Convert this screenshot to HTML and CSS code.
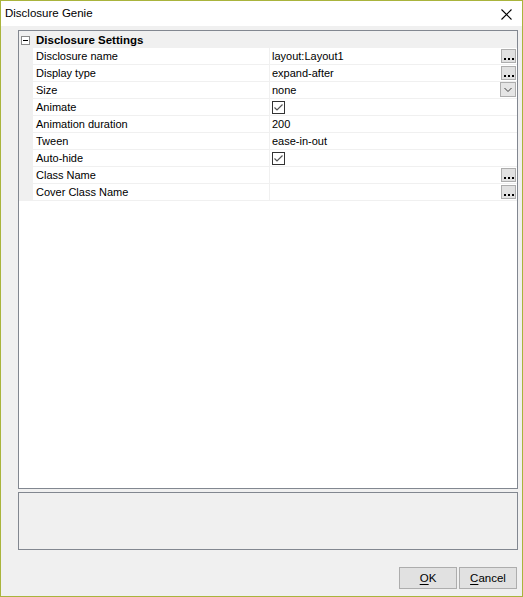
FILE: index.html
```html
<!DOCTYPE html>
<html>
<head>
<meta charset="utf-8">
<link rel="stylesheet" href="styles.css">
</head>
<body>
<div class="window">
  <div class="titlebar">
    <span class="title">Disclosure Genie</span>
    <svg class="close" width="11" height="11" viewBox="0 0 11 11"><path d="M0.5 0.5 L10.5 10.5 M10.5 0.5 L0.5 10.5" stroke="#000" stroke-width="1.1" fill="none"/></svg>
  </div>
  <div class="client">
    <div class="grid">
      <div class="cat">
        <span class="exp"><span class="minus"></span></span>
        <span class="cat-label">Disclosure Settings</span>
      </div>
      <div class="row"><div class="margin"></div><div class="name">Disclosure name</div><div class="value"><span>layout:Layout1</span><span class="ell"><svg width="13" height="12" viewBox="0 0 13 12"><rect x="2" y="8" width="2" height="2" fill="#000"/><rect x="6" y="8" width="2" height="2" fill="#000"/><rect x="10" y="8" width="2" height="2" fill="#000"/></svg></span></div></div>
      <div class="row"><div class="margin"></div><div class="name">Display type</div><div class="value"><span>expand-after</span><span class="ell"><svg width="13" height="12" viewBox="0 0 13 12"><rect x="2" y="8" width="2" height="2" fill="#000"/><rect x="6" y="8" width="2" height="2" fill="#000"/><rect x="10" y="8" width="2" height="2" fill="#000"/></svg></span></div></div>
      <div class="row"><div class="margin"></div><div class="name">Size</div><div class="value"><span>none</span><span class="drop"><svg width="14" height="13" viewBox="0 0 14 13"><path d="M3.5 5 L7 8.5 L10.5 5" stroke="#3c3c3c" stroke-width="1" fill="none"/></svg></span></div></div>
      <div class="row"><div class="margin"></div><div class="name">Animate</div><div class="value"><span class="check"><svg width="11" height="11" viewBox="0 0 11 11"><path d="M1.5 5.5 L4 8 L9.5 2.5" stroke="#555" stroke-width="1.2" fill="none"/></svg></span></div></div>
      <div class="row"><div class="margin"></div><div class="name">Animation duration</div><div class="value"><span class="num">200</span></div></div>
      <div class="row"><div class="margin"></div><div class="name">Tween</div><div class="value"><span>ease-in-out</span></div></div>
      <div class="row"><div class="margin"></div><div class="name">Auto-hide</div><div class="value"><span class="check"><svg width="11" height="11" viewBox="0 0 11 11"><path d="M1.5 5.5 L4 8 L9.5 2.5" stroke="#555" stroke-width="1.2" fill="none"/></svg></span></div></div>
      <div class="row"><div class="margin"></div><div class="name">Class Name</div><div class="value"><span></span><span class="ell"><svg width="13" height="12" viewBox="0 0 13 12"><rect x="2" y="8" width="2" height="2" fill="#000"/><rect x="6" y="8" width="2" height="2" fill="#000"/><rect x="10" y="8" width="2" height="2" fill="#000"/></svg></span></div></div>
      <div class="row"><div class="margin"></div><div class="name">Cover Class Name</div><div class="value"><span></span><span class="ell"><svg width="13" height="12" viewBox="0 0 13 12"><rect x="2" y="8" width="2" height="2" fill="#000"/><rect x="6" y="8" width="2" height="2" fill="#000"/><rect x="10" y="8" width="2" height="2" fill="#000"/></svg></span></div></div>
    </div>
    <div class="desc"></div>
    <div class="buttons">
      <button class="btn"><u>O</u>K</button>
      <button class="btn"><u>C</u>ancel</button>
    </div>
  </div>
</div>
</body>
</html>
```
FILE: styles.css
```css
html, body {
  margin: 0;
  padding: 0;
  background: #f0f0f0;
}
.window {
  width: 523px;
  height: 597px;
  box-sizing: border-box;
  border: 1px solid #a9b43c;
  background: #f0f0f0;
  display: flex;
  flex-direction: column;
  font-family: "Liberation Sans", Arial, sans-serif;
  color: #000;
}
.titlebar {
  height: 25px;
  background: #fff;
  display: flex;
  align-items: center;
  justify-content: space-between;
  padding: 0 10px 0 4px;
  flex: none;
}
.title {
  font-size: 11.5px;
  margin-top: -1px;
}
.close {
  display: block;
  margin-top: 1px;
}
.client {
  flex: 1;
  display: flex;
  flex-direction: column;
  padding: 4px 4px 0 17px;
}
.grid {
  width: 500px;
  height: 459px;
  box-sizing: border-box;
  border: 1px solid #828790;
  background: #fff;
  font-size: 11px;
  display: flex;
  flex-direction: column;
}
.cat {
  height: 17px;
  background: #f0f0f0;
  display: flex;
  align-items: center;
  flex: none;
}
.exp {
  width: 9px;
  height: 9px;
  box-sizing: border-box;
  border: 1px solid #8a8a8a;
  background: #fff;
  margin-left: 2px;
  margin-top: 1px;
  display: flex;
  align-items: center;
  justify-content: center;
}
.minus {
  width: 5px;
  height: 1px;
  background: #000;
}
.cat-label {
  font-weight: bold;
  margin-left: 6px;
  line-height: 16px;
  font-size: 11.5px;
}
.row {
  display: flex;
  height: 17px;
  flex: none;
}
.margin {
  width: 14px;
  background: #f0f0f0;
  flex: none;
}
.name {
  width: 237px;
  box-sizing: border-box;
  border-right: 1px solid #f0f0f0;
  border-bottom: 1px solid #f0f0f0;
  padding-left: 3px;
  line-height: 16px;
  flex: none;
  white-space: nowrap;
}
.value {
  flex: 1;
  border-bottom: 1px solid #f0f0f0;
  padding-left: 2px;
  line-height: 16px;
  display: flex;
  justify-content: space-between;
  align-items: flex-start;
  white-space: nowrap;
}
.ell {
  width: 15px;
  height: 14px;
  box-sizing: border-box;
  border: 1px solid #adadad;
  background: #e1e1e1;
  margin: 1px 1px 0 0;
  display: block;
}
.ell svg, .drop svg, .check svg {
  display: block;
}
.drop {
  width: 16px;
  height: 15px;
  box-sizing: border-box;
  border: 1px solid #adadad;
  background: #e5e5e5;
  margin: 0 1px 0 0;
  display: block;
}
.check {
  width: 13px;
  height: 13px;
  box-sizing: border-box;
  border: 1px solid #333;
  background: #fff;
  margin-top: 2px;
  display: block;
}
.desc {
  width: 500px;
  height: 58px;
  box-sizing: border-box;
  border: 1px solid #828790;
  background: #f0f0f0;
  margin-top: 3px;
}
.buttons {
  display: flex;
  justify-content: flex-end;
  gap: 2px;
  margin-top: 17px;
  margin-right: 1px;
}
.btn {
  width: 58px;
  height: 22px;
  box-sizing: border-box;
  border: 1px solid #adadad;
  background: #e1e1e1;
  font-family: "Liberation Sans", Arial, sans-serif;
  font-size: 11.5px;
  color: #000;
  padding: 0;
  margin: 0;
}
.btn u {
  text-decoration-thickness: 1px;
  text-underline-offset: 2px;
}
```
